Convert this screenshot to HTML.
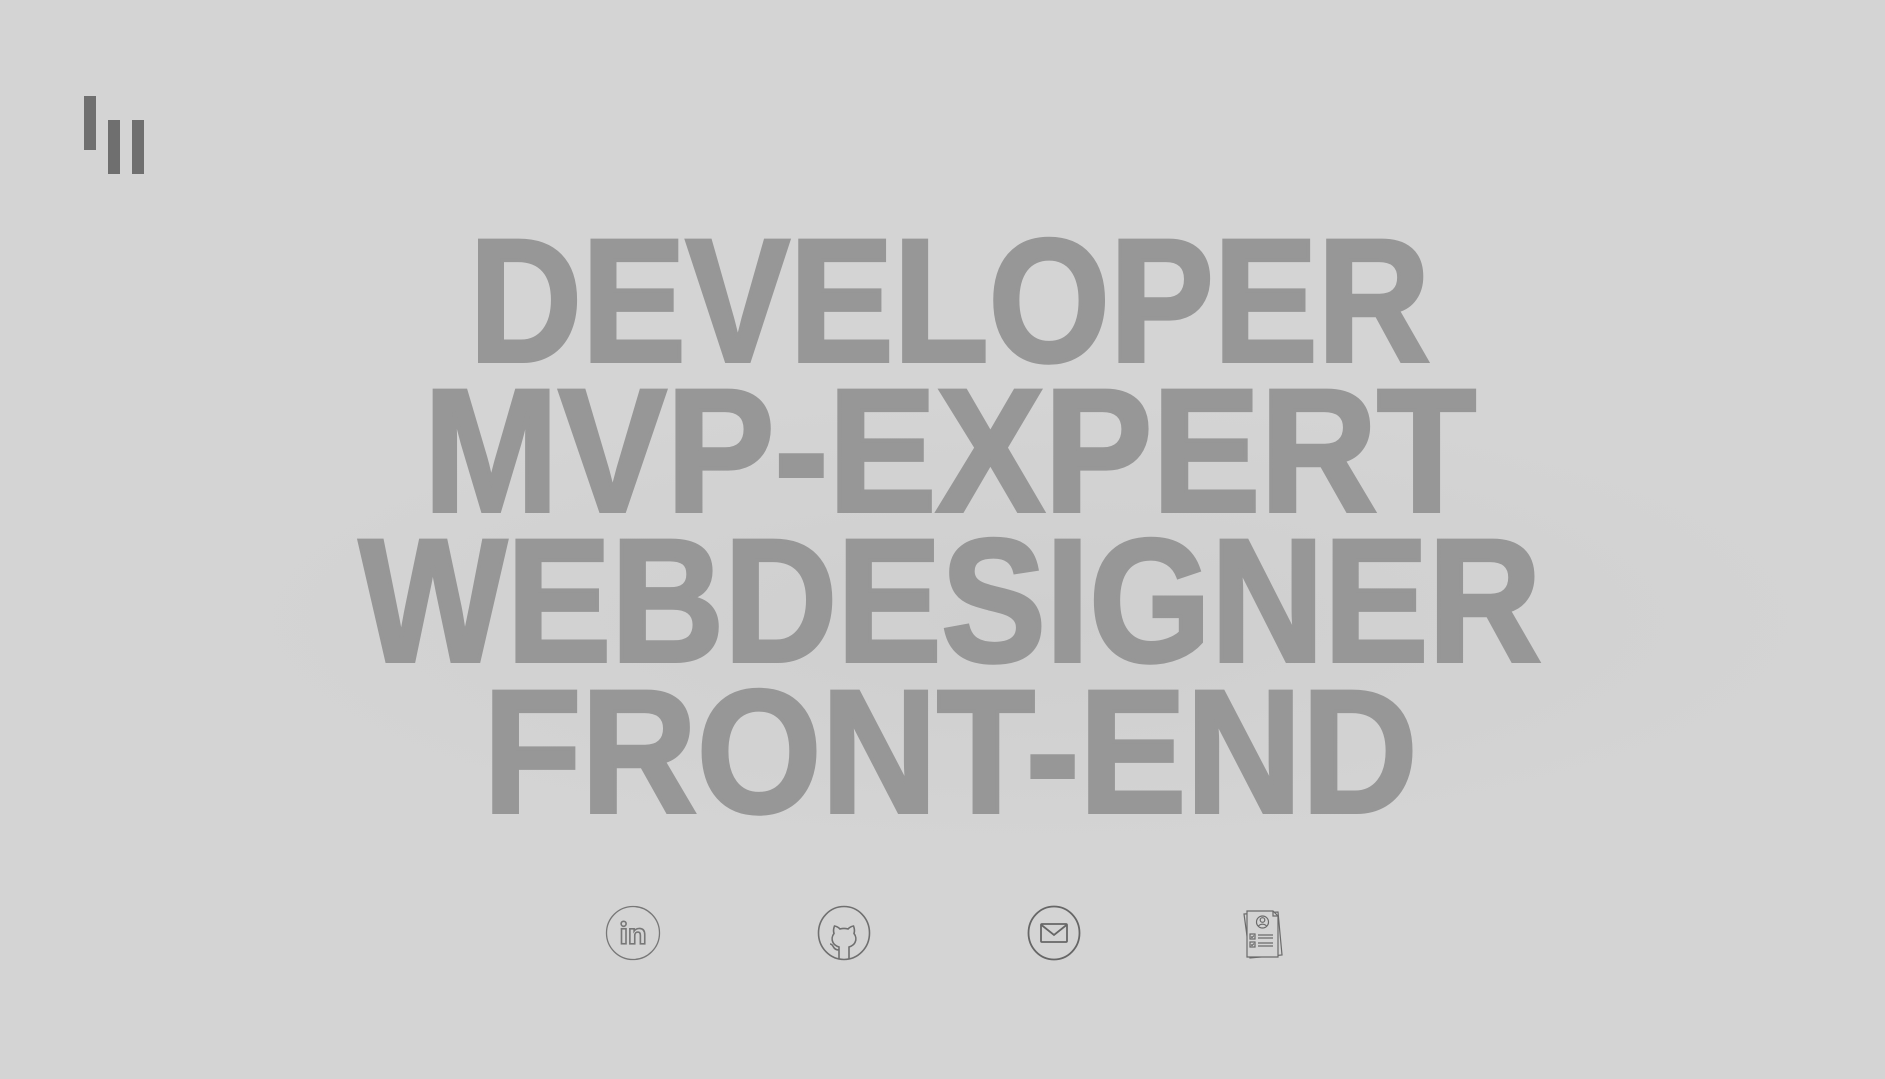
<!DOCTYPE html>
<html><head><meta charset="utf-8"><style>
html,body{margin:0;padding:0}
body{width:1885px;height:1079px;background:#d4d4d4;position:relative;overflow:hidden;font-family:"Liberation Sans",Arial,sans-serif}
.smudge{position:absolute;left:180px;top:380px;width:1700px;height:480px;background:radial-gradient(ellipse at 50% 50%,rgba(195,195,195,.3),rgba(212,212,212,0) 70%)}
.bar{position:absolute;background:#6f6f6f;width:12px}
.line{position:absolute;left:0;width:1900px;text-align:center;font-weight:bold;font-size:175px;line-height:175px;color:#979797;white-space:nowrap;-webkit-text-stroke:4px #979797}
.line span{display:inline-block}
.ic{position:absolute;width:56px;height:56px}
</style></head><body>
<div class="smudge"></div>
<div class="bar" style="left:84px;top:96px;height:54px"></div>
<div class="bar" style="left:108px;top:120px;height:54px"></div>
<div class="bar" style="left:132px;top:120px;height:54px"></div>

<div class="line" style="top:214px"><span style="transform:scaleX(0.89)">DEVELOPER</span></div>
<div class="line" style="top:364px"><span style="transform:scaleX(0.925)">MVP-EXPERT</span></div>
<div class="line" style="top:514px"><span style="transform:scaleX(0.894)">WEBDESIGNER</span></div>
<div class="line" style="top:665px"><span style="transform:scaleX(0.915)">FRONT-END</span></div>

<svg class="ic" style="left:605px;top:905px" viewBox="0 0 56 56" fill="none" stroke="#777" stroke-width="1.3">
<circle cx="28" cy="28" r="26.5"/>
<g transform="translate(28 30) scale(1.25) translate(-27 -29)">
<circle cx="19.5" cy="20" r="2"/>
<rect x="17.8" y="24" width="3.6" height="12"/>
<path d="M24.5 24h3.4v1.8c1-1.5 2.6-2.1 4.2-2.1 3 0 4.3 1.9 4.3 5V36h-3.5v-6.8c0-1.7-.6-2.6-2-2.6s-2.5 1-2.5 2.8V36h-3.9z"/>
</g>
</svg>
<svg class="ic" style="left:816px;top:905px" viewBox="0 0 56 56" fill="none" stroke="#6f6f6f" stroke-width="1.6">
<ellipse cx="28" cy="28" rx="25.5" ry="26.5"/>
<path d="M23 54.5V42c-3-1-5-2.5-6-4.5-1.5-3-1-6.5 1-9-.8-2.5-.5-5 .5-7.5 2 .2 4 1.5 5.5 3 3-.8 5-.8 8 0 1.5-1.5 3.5-2.8 5.5-3 1 2.5 1.3 5 .5 7.5 2 2.5 2.5 6 1 9-1 2-3 3.5-6 4.5v12.5M23 45c-3 0-4.5-1-5.5-3s-2-3-3.5-3"/>
</svg>
<svg class="ic" style="left:1026px;top:905px" viewBox="0 0 56 56" fill="none" stroke="#666" stroke-width="1.8">
<ellipse cx="28" cy="28" rx="25.5" ry="26.5"/>
<rect x="15" y="19" width="26" height="18" rx="1"/>
<path d="M15.5 20 28 30l12.5-10"/>
</svg>
<svg class="ic" style="left:1235px;top:905px" viewBox="0 0 56 56" fill="none" stroke="#6a6a6a" stroke-width="1.2">
<path d="M9 9l34-2 4 43-32 3z"/>
<path d="M12 6h26l5 5v41H12z" fill="#d4d4d4"/>
<path d="M38 6v5h5"/>
<circle cx="27.5" cy="17" r="6"/>
<circle cx="27.5" cy="15" r="2.3"/>
<path d="M23.5 21c2.2-2.4 5.8-2.4 8 0"/>
<rect x="15" y="29" width="5" height="5"/><rect x="15" y="37" width="5" height="5"/>
<path d="M23 30h15M23 33h15M23 38h15M23 41h15M16 31.5l1 1 2-2M16 39.5l1 1 2-2"/>
</svg>
</body></html>
